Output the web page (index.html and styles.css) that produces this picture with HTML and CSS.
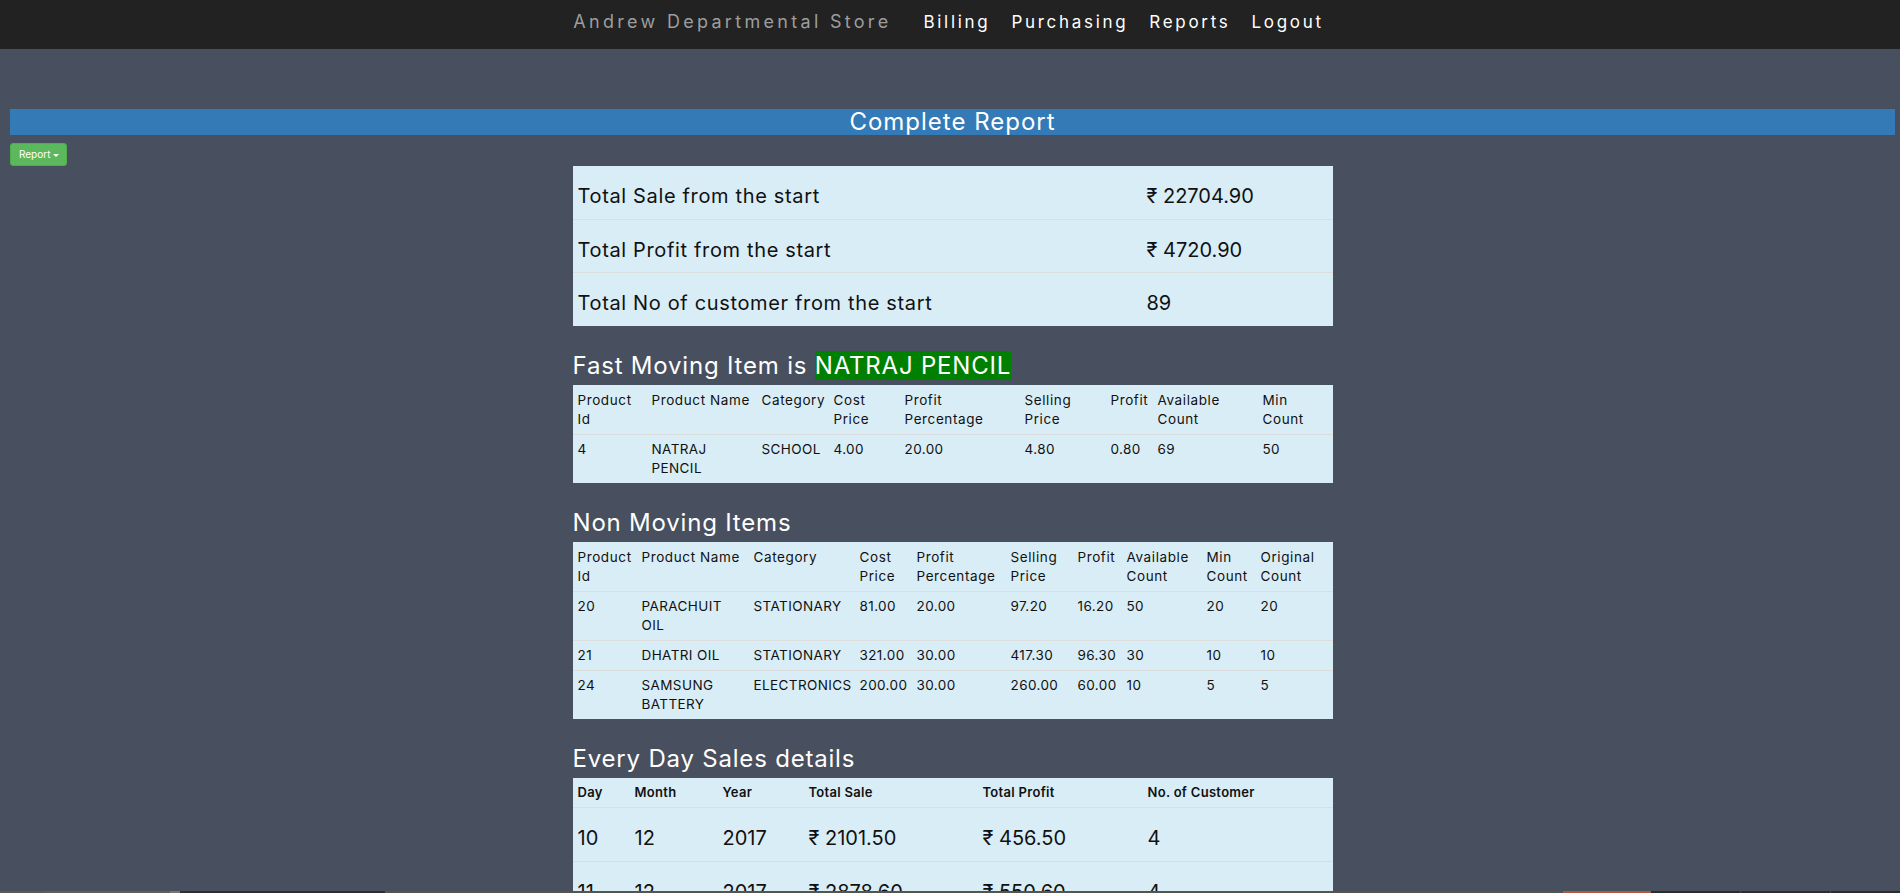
FILE: index.html
```html
<!DOCTYPE html>
<html lang="en">
<head>
<meta charset="utf-8">
<title>Andrew Departmental Store - Reports</title>
<link rel="stylesheet" href="styles.css">
</head>
<body>
<nav class="navbar">
  <div class="nav-inner">
    <span class="brand">Andrew Departmental Store</span>
    <ul class="nav-links">
      <li><a href="#">Billing</a></li>
      <li><a href="#">Purchasing</a></li>
      <li><a href="#">Reports</a></li>
      <li><a href="#">Logout</a></li>
    </ul>
  </div>
</nav>

<main class="page">
  <h3 class="banner">Complete Report</h3>
  <div class="btn-row">
    <button class="btn-report" type="button">Report <span class="caret"></span></button>
  </div>

  <section class="report">
    <table class="summary">
      <colgroup><col class="s-label"><col class="s-value"></colgroup>
      <tbody>
        <tr><td class="label">Total Sale from the start</td><td>₹ 22704.90</td></tr>
        <tr><td class="label">Total Profit from the start</td><td>₹ 4720.90</td></tr>
        <tr><td class="label">Total No of customer from the start</td><td>89</td></tr>
      </tbody>
    </table>

    <h3 class="section-title">Fast Moving Item is <span class="hl">NATRAJ PENCIL</span></h3>
    <table class="grid">
      <colgroup>
        <col class="f1"><col class="f2"><col class="f3"><col class="f4"><col class="f5">
        <col class="f6"><col class="f7"><col class="f8"><col class="f9">
      </colgroup>
      <thead>
        <tr>
          <th>Product<br>Id</th><th>Product Name</th><th>Category</th><th>Cost<br>Price</th>
          <th>Profit<br>Percentage</th><th>Selling<br>Price</th><th>Profit</th>
          <th>Available<br>Count</th><th>Min<br>Count</th>
        </tr>
      </thead>
      <tbody>
        <tr>
          <td>4</td><td>NATRAJ<br>PENCIL</td><td>SCHOOL</td><td>4.00</td><td>20.00</td>
          <td>4.80</td><td>0.80</td><td>69</td><td>50</td>
        </tr>
      </tbody>
    </table>

    <h3 class="section-title">Non Moving Items</h3>
    <table class="grid">
      <colgroup>
        <col class="n1"><col class="n2"><col class="n3"><col class="n4"><col class="n5">
        <col class="n6"><col class="n7"><col class="n8"><col class="n9"><col class="n10">
      </colgroup>
      <thead>
        <tr>
          <th>Product<br>Id</th><th>Product Name</th><th>Category</th><th>Cost<br>Price</th>
          <th>Profit<br>Percentage</th><th>Selling<br>Price</th><th>Profit</th>
          <th>Available<br>Count</th><th>Min<br>Count</th><th>Original<br>Count</th>
        </tr>
      </thead>
      <tbody>
        <tr>
          <td>20</td><td>PARACHUIT<br>OIL</td><td>STATIONARY</td><td>81.00</td><td>20.00</td>
          <td>97.20</td><td>16.20</td><td>50</td><td>20</td><td>20</td>
        </tr>
        <tr>
          <td>21</td><td>DHATRI OIL</td><td>STATIONARY</td><td>321.00</td><td>30.00</td>
          <td>417.30</td><td>96.30</td><td>30</td><td>10</td><td>10</td>
        </tr>
        <tr>
          <td>24</td><td>SAMSUNG<br>BATTERY</td><td>ELECTRONICS</td><td>200.00</td><td>30.00</td>
          <td>260.00</td><td>60.00</td><td>10</td><td>5</td><td>5</td>
        </tr>
      </tbody>
    </table>

    <h3 class="section-title">Every Day Sales details</h3>
    <table class="grid daily">
      <colgroup>
        <col class="d1"><col class="d2"><col class="d3"><col class="d4"><col class="d5"><col class="d6">
      </colgroup>
      <thead>
        <tr><th>Day</th><th>Month</th><th>Year</th><th>Total Sale</th><th>Total Profit</th><th>No. of Customer</th></tr>
      </thead>
      <tbody>
        <tr><td>10</td><td>12</td><td>2017</td><td>₹ 2101.50</td><td>₹ 456.50</td><td>4</td></tr>
        <tr><td>11</td><td>12</td><td>2017</td><td>₹ 2878.60</td><td>₹ 550.60</td><td>4</td></tr>
      </tbody>
    </table>
  </section>
</main>

<div class="taskbar">
  <span class="tb tb-a"></span><span class="tb tb-b"></span><span class="tb tb-c"></span>
  <span class="tb tb-d"></span><span class="tb tb-e"></span><span class="tb tb-f"></span>
  <span class="tb tb-g"></span><span class="tb tb-h"></span><span class="tb tb-i"></span>
</div>
</body>
</html>
```

FILE: styles.css
```css
* { box-sizing: border-box; }

html, body {
  margin: 0;
  padding: 0;
}

body {
  background: #484f5e;
  font-family: "Inter", "Noto Sans", "DejaVu Sans", sans-serif;
  color: #111;
  min-height: 893px;
}

/* ---------- navbar ---------- */
.navbar {
  height: 49px;
  background: #222222;
  padding-bottom: 6px;
  display: flex;
  align-items: center;
  justify-content: center;
}

.nav-inner {
  display: flex;
  align-items: center;
  margin-left: -3px;
}

.brand {
  font-size: 18px;
  line-height: 20px;
  letter-spacing: 3.3px;
  color: #9d9d9d;
  margin-right: 32px;
}

.nav-links {
  list-style: none;
  margin: 0;
  padding: 0;
  display: flex;
  gap: 21px;
}

.nav-links a {
  display: block;
  font-size: 17px;
  line-height: 20px;
  letter-spacing: 2.7px;
  color: #ffffff;
  text-decoration: none;
}

/* ---------- page ---------- */
.page {
  margin: 0 5px 0 10px;
  padding-top: 60px;
}

.banner {
  margin: 0;
  height: 26px;
  background: #337ab7;
  color: #ffffff;
  font-weight: 400;
  font-size: 24px;
  line-height: 26px;
  letter-spacing: 1px;
  text-align: center;
}

.btn-row {
  display: flex;
  padding-top: 8px;
}

.btn-report {
  display: inline-flex;
  align-items: center;
  gap: 3px;
  height: 23px;
  padding: 0 7px 0 8px;
  font-family: inherit;
  font-size: 10px;
  line-height: 15px;
  color: #ffffff;
  background: #5cb85c;
  border: 1px solid #4cae4c;
  border-radius: 3px;
}

.caret {
  width: 0;
  height: 0;
  border-top: 3px solid #ffffff;
  border-left: 3px solid transparent;
  border-right: 3px solid transparent;
  margin-top: 1px;
}

.report {
  width: 760px;
  margin: 0 auto;
}

/* ---------- tables ---------- */
table {
  width: 760px;
  table-layout: fixed;
  border-collapse: collapse;
  background: #d9edf7;
}

.summary td {
  font-size: 20px;
  line-height: 30px;
  padding: 15px 5px 7.5px;
  white-space: nowrap;
}

.summary td.label {
  letter-spacing: 0.65px;
}

.summary tr + tr td {
  border-top: 1px solid #dddddd;
}

.s-label { width: 569px; }
.s-value { width: 191px; }

.section-title {
  margin: 25px 0 5px;
  font-size: 24px;
  line-height: 29px;
  font-weight: 400;
  letter-spacing: 0.8px;
  color: #ffffff;
}

.hl {
  background: #008000;
  color: #ffffff;
}

.grid th,
.grid td {
  font-size: 13.5px;
  line-height: 19px;
  letter-spacing: 0.4px;
  padding: 5px;
  text-align: left;
  vertical-align: top;
  white-space: nowrap;
}

.grid th {
  font-weight: 400;
  letter-spacing: 0.6px;
  padding-top: 6px;
}

.grid td {
  border-top: 1px solid #dddddd;
}

.daily th {
  font-size: 13px;
  font-weight: 600;
  letter-spacing: 0.3px;
  padding-top: 5px;
}

.daily td {
  font-size: 20px;
  line-height: 30px;
  letter-spacing: 0;
  padding: 15px 5px 8px;
}

/* fast moving columns */
.f1 { width: 74px; }
.f2 { width: 110px; }
.f3 { width: 72px; }
.f4 { width: 71px; }
.f5 { width: 120px; }
.f6 { width: 86px; }
.f7 { width: 47px; }
.f8 { width: 105px; }
.f9 { width: 75px; }

/* non moving columns */
.n1 { width: 64px; }
.n2 { width: 112px; }
.n3 { width: 106px; }
.n4 { width: 57px; }
.n5 { width: 94px; }
.n6 { width: 67px; }
.n7 { width: 49px; }
.n8 { width: 80px; }
.n9 { width: 54px; }
.n10 { width: 77px; }

/* daily columns */
.d1 { width: 57px; }
.d2 { width: 88px; }
.d3 { width: 86px; }
.d4 { width: 174px; }
.d5 { width: 165px; }
.d6 { width: 190px; }

/* ---------- bottom taskbar strip ---------- */
.taskbar {
  position: fixed;
  left: 0;
  right: 0;
  bottom: 0;
  height: 2px;
  display: flex;
}

.tb { display: block; height: 100%; }
.tb-a { width: 45px; background: #5a5b52; }
.tb-b { width: 125px; background: #5f5f58; }
.tb-c { width: 10px; background: #77776c; }
.tb-d { width: 205px; background: #2e2e2e; }
.tb-e { flex: 1; background: #55554f; }
.tb-f { width: 88px; background: #b3573a; }
.tb-g { width: 89px; background: #2b2b2b; }
.tb-h { width: 90px; background: #2d2d2d; border-left: 1px solid #444; }
.tb-i { width: 70px; background: #2b2b2b; border-left: 1px solid #444; }
```
